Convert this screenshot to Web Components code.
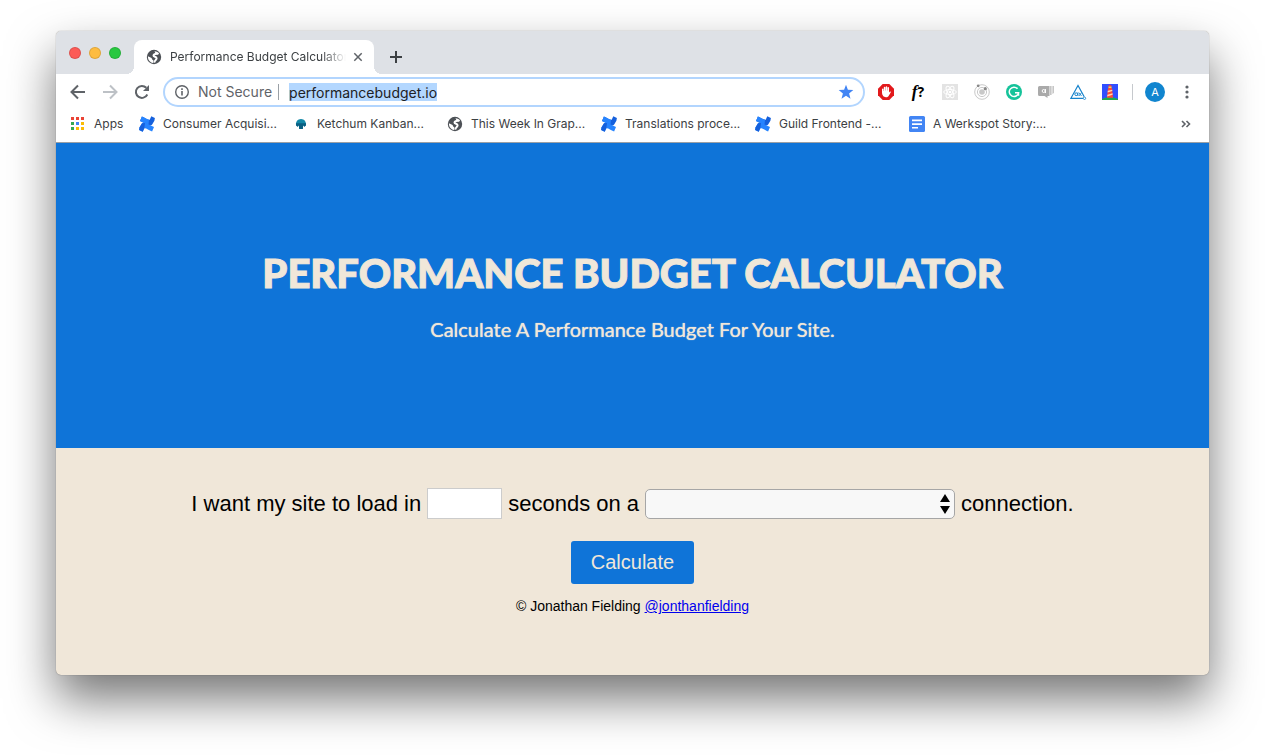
<!DOCTYPE html>
<html lang="en">
<head>
<meta charset="utf-8">
<title>Performance Budget Calculator</title>
<style>
html{height:100%}
body{margin:0;min-height:100%;background:#fff;display:flex;flex-direction:column}
</style>
</head>
<body>
<browser-window>
  <browser-tab slot="tabs">Performance Budget Calculator</browser-tab>
  <tool-bar slot="toolbar" address="performancebudget.io"></tool-bar>
  <bookmark-bar slot="bookmarks">
    <bookmark-item icon="confluence">Consumer Acquisi...</bookmark-item>
    <bookmark-item icon="ketchum">Ketchum Kanban...</bookmark-item>
    <bookmark-item icon="globe">This Week In Grap...</bookmark-item>
    <bookmark-item icon="confluence">Translations proce...</bookmark-item>
    <bookmark-item icon="confluence">Guild Frontend -...</bookmark-item>
    <bookmark-item icon="docs">A Werkspot Story:...</bookmark-item>
  </bookmark-bar>
  <page-hero>
    <span slot="title">Performance Budget Calculator</span>
    <span slot="tagline">Calculate A Performance Budget For Your Site.</span>
  </page-hero>
  <budget-form></budget-form>
  <page-credits>© Jonathan Fielding</page-credits>
</browser-window>

<script>
const ICONS = {
  globe: `<circle cx="8" cy="8" r="7.200" fill="#4d5156"/><path fill="none" stroke="#fff" stroke-width="2" d="M12.300 4.800C10.500 4.700 8 5 7.500 6.300 7.300 8 10.500 7.500 10.600 9.300 10.600 10.800 8.600 11.300 8.200 13.600"/><path fill="#fff" d="M1.900 7.300 5.600 9 6.200 10.500 7.500 11.500 7 13.900C4 13.600 1.800 11 1.900 7.300ZM8.500 2.200C10.500 2.200 12.300 3.200 13.200 5L11 5.300 9.500 4.600Z"/>`,
  confluence: `<path fill="#1560dc" d="M15.400 4.800 13 8.800C11 10.200 8.600 8.800 7.300 8L1 4.900 2.900.5C6.200 2 9.300 4.300 10.700 3.700L12.300.3 15.900 2Z"/><path fill="#2684ff" d="M1 4.900 2.900.5C6.200 2 8.300 3.200 10 3.800L9.500 8.700 7.300 8Z"/><path fill="#2684ff" d="M.6 11.200 3 7.200C5 5.800 7.400 7.200 8.700 8L15 11.100 13.100 15.500C9.800 14 6.700 11.700 5.300 12.300L3.700 15.700.1 14Z"/><path fill="#1560dc" d="M.6 11.200 3 7.200 6 7 5.300 12.300 3.700 15.700.1 14Z"/>`,
  ketchum: `<path fill="#1389a8" d="M3 9C2.600 5.800 4.700 3 8 3S13.400 5.800 13 9L11.600 10.800 10.200 9.600 9.800 13H6.200L5.800 9.600 4.400 10.800Z"/><path fill="#0a5f82" d="M3 7.300H13V9.300L11.600 10.800 10.200 8.900 9.800 13H6.200L5.800 8.900 4.400 10.800 3 9.300Z"/>`,
  docs: `<rect width="16" height="16" rx="1.500" fill="#4285f4"/><path fill="#fff" d="M3 3.500h10v1.700H3zm0 3.700h10v1.700H3zm0 3.700h6v1.700H3z"/>`,
  apps: `<g shape-rendering="crispEdges"><path fill="#ea4335" d="M1 1h3v3H1zm5 0h3v3H6zm5 0h3v3h-3z"/><path fill="#34a853" d="M1 6h3v3H1zm0 5h3v3H1z"/><path fill="#4285f4" d="M6 6h3v3H6z"/><path fill="#fbbc05" d="M11 6h3v3h-3zM6 11h3v3H6zm5 0h3v3h-3z"/></g>`,
  back: `<path d="M15 8H2M8 1.500 1.500 8 8 14.500" fill="none" stroke="#5f6368" stroke-width="2"/>`,
  forward: `<path d="M1 8H14M8 1.500 14.500 8 8 14.500" fill="none" stroke="#bdc1c6" stroke-width="2"/>`,
  reload: `<path d="M13.300 10.500A6 6 0 1 1 12.300 3.800" fill="none" stroke="#5f6368" stroke-width="2"/><path d="M15 1V7H9Z" fill="#5f6368"/>`,
  info: `<circle cx="8" cy="8" r="6.300" fill="none" stroke="#5f6368" stroke-width="1.400"/><path fill="#5f6368" d="M7.200 7h1.600v4.500H7.200zm0-2.700h1.600v1.600H7.200z"/>`,
  star: `<path fill="#4285f4" d="M8 .8 9.900 5.800 15.300 6.100 11.100 9.500 12.500 14.700 8 11.800 3.500 14.700 4.900 9.500.7 6.100 6.100 5.800Z"/>`,
  close: `<path d="M4.300 4.300 11.700 11.700M11.700 4.300 4.300 11.700" stroke="#5f6368" stroke-width="1.500"/>`,
  plus: `<path d="M8 2V14M2 8H14" stroke="#3c4043" stroke-width="2"/>`,
  stop: `<path fill="#e2191c" d="M4.700 0h6.600L16 4.700v6.600L11.300 16H4.700L0 11.300V4.700Z"/><path fill="#fff" d="M4 5.200C4 4.300 5.500 4.300 5.500 5.200V7H5.800V3.500C5.800 2.500 7.400 2.500 7.400 3.500V6.500H7.700V3C7.700 2 9.200 2 9.200 3V6.500H9.500V3.700C9.500 2.700 11 2.700 11 3.700V8.600L11.700 7.800C12.400 7.200 13.100 7.900 12.700 8.600L10.600 12C9.800 13.600 6.200 13.700 5.200 12.100 4.400 11 4 10 4 9Z"/>`,
  react: `<path fill="#e3e3e3" d="M0 0h16v16H0z"/><g fill="none" stroke="#fff"><ellipse cx="8" cy="8" rx="6.300" ry="2.500"/><ellipse cx="8" cy="8" rx="6.300" ry="2.500" transform="rotate(60 8 8)"/><ellipse cx="8" cy="8" rx="6.300" ry="2.500" transform="rotate(120 8 8)"/></g><circle cx="8" cy="8" r="1.300" fill="#fff"/>`,
  orbit: `<g fill="none" stroke="#c9c9c9"><circle cx="8" cy="8" r="7.300"/><circle cx="8" cy="8" r="4.600"/></g><circle cx="8" cy="8" r="2.800" fill="#c8c8c8"/><circle cx="4.200" cy="1.800" r="1.400" fill="#888"/><circle cx="11.300" cy="4.700" r="1.600" fill="#888"/>`,
  grammar: `<circle cx="8" cy="8" r="8" fill="#15c39a"/><path d="M11.500 4.700A4.700 4.700 0 1 0 12.600 8.800H9M12.500 8.800V11.800" fill="none" stroke="#fff" stroke-width="1.500"/>`,
  chat: `<path fill="#aaa" d="M1.500 2H11.500V12H9.500V14L6.500 12H1.500Q0 12 0 10.500V3.500Q0 2 1.500 2Z"/><path fill="#b8b8b8" d="M12.200 2H13.500V11H12.200zM14.500 2H15.800V9L14.500 10z"/><circle cx="5.700" cy="7" r="1.500" fill="none" stroke="#fff"/><path stroke="#fff" d="M7.500 5.100V9"/>`,
  axe: `<path d="M13.500 14.300H.9L8 1.500 14.200 12.800" fill="none" stroke="#1683cc" stroke-width="1.200"/><circle cx="14.500" cy="14.300" r="1.200" fill="#fff" stroke="#1683cc" stroke-width=".8"/><circle cx="6.200" cy="10.200" r="1.400" fill="none" stroke="#1683cc"/><path d="M7.900 8.500V12M8.900 8.600 11.500 12M11.500 8.600 8.900 12" fill="none" stroke="#1683cc" stroke-width=".9"/>`,
  lighthouse: `<path fill="#304ffe" d="M0 0h16v16H0z"/><path fill="#1faa4b" d="M0 16V15Q8 11 16 15V16Z"/><path fill="#ff4a35" d="M6 4h4L11 13.700H5Z"/><path fill="#ffd9b0" d="M5.800 6.800 10.300 5.700V7L5.600 8.500ZM5.400 10.800 10.600 9.300V10.800L5.200 12.500Z"/><path fill="#f34" d="M5.500 2.500 8 .5 10.500 2.500Z"/><path fill="#fdd835" d="M6.500 2.500h3V4h-3z"/>`,
  dots: `<g fill="#5f6368"><circle cx="8" cy="3" r="1.600"/><circle cx="8" cy="8" r="1.600"/><circle cx="8" cy="13" r="1.600"/></g>`,
  more: `<path d="M4 5 7 8 4 11M8.500 5 11.500 8 8.500 11" fill="none" stroke="#5f6368" stroke-width="1.600"/>`,
};

function define(name, html, setup) {
  const template = document.createElement('template');
  template.innerHTML = html;
  customElements.define(name, class extends HTMLElement {
    constructor() {
      super();
      this.attachShadow({ mode: 'open' }).append(template.content.cloneNode(true));
    }
    connectedCallback() {
      if (setup) setup(this, this.shadowRoot);
    }
  });
}

define('ui-icon', `<style>
  :host{display:block;flex:none;width:16px;height:16px}
  svg{display:block;width:100%;height:100%;overflow:visible}
</style><svg viewBox="0 0 16 16" aria-hidden="true"></svg>`, (host, root) => {
  root.querySelector('svg').innerHTML = ICONS[host.getAttribute('name')] || '';
});

define('browser-window', `<style>
  :host{display:flex;flex-direction:column;flex:1;margin:31px 56px 80px;border-radius:5px;overflow:hidden;background:#f0e7d9;
    font-family:Inter,"Liberation Sans",sans-serif;color:#3c4043;
    box-shadow:0 0 1px rgba(0,0,0,.5),0 24px 48px rgba(0,0,0,.54)}
  .strip{display:flex;align-items:flex-end;height:43px;background:#dee1e6;padding-left:13px;box-sizing:border-box}
  .lights{display:flex;gap:8px;align-self:center;margin-right:13px}
  .lights i{width:12px;height:12px;border-radius:50%;box-sizing:border-box;border:1px solid rgba(0,0,0,.12)}
  .lights i:nth-child(1){background:#fc5b57}.lights i:nth-child(2){background:#fdbc40}.lights i:nth-child(3){background:#28c840}
  button{border:0;background:none;padding:0;margin:0 0 9px 14px}
  main{display:block;flex:1;border-top:1px solid #9aa0a6}
</style>
<div class="strip"><div class="lights"><i></i><i></i><i></i></div><slot name="tabs"></slot>
<button aria-label="New tab"><ui-icon name="plus"></ui-icon></button></div>
<slot name="toolbar"></slot><slot name="bookmarks"></slot><main><slot></slot></main>`);

define('browser-tab', `<style>
  :host{display:flex;align-items:center;position:relative;width:240px;height:34px;box-sizing:border-box;padding:0 8px 0 12px;
    background:#fff;border-radius:8px 8px 0 0;font-size:12px}
  :host::before,:host::after{content:"";position:absolute;bottom:0;width:8px;height:8px}
  :host::before{left:-8px;background:radial-gradient(circle at 0 0,transparent 8px,#fff 8px)}
  :host::after{right:-8px;background:radial-gradient(circle at 100% 0,transparent 8px,#fff 8px)}
  .name{flex:1;min-width:0;margin-left:8px;white-space:nowrap;overflow:hidden;line-height:16px;
    mask-image:linear-gradient(to right,#000 calc(100% - 24px),transparent)}
  button{border:0;background:none;padding:0;margin-left:4px}
</style><ui-icon name="globe"></ui-icon><span class="name"><slot></slot></span>
<button aria-label="Close tab"><ui-icon name="close"></ui-icon></button>`);

define('tool-bar', `<style>
  :host{display:flex;align-items:center;height:36px;background:#fff;padding:0 14px}
  button{border:0;background:none;padding:0;font:inherit;color:inherit;display:block}
  .nav,.ext{display:flex;gap:16px}
  .box{flex:1;min-width:0;display:flex;align-items:center;height:30px;box-sizing:border-box;margin:0 13px;padding:0 9px;
    border:2px solid #b2d5fe;border-radius:15px;font-size:14px}
  .note{margin-left:8px;padding-right:6px;border-right:1px solid #9aa0a6;line-height:16px;color:#5f6368;white-space:nowrap}
  input{border:0;padding:0;margin-left:10px;height:18px;font:inherit;color:#202124;background:#b3d7ff;field-sizing:content;outline:0}
  .star{margin-left:auto}
  .what{width:16px;font:bold 14px/16px "Open Sans","Liberation Sans",sans-serif;color:#000;white-space:nowrap}
  .what i{font:italic bold 17px/16px "Liberation Serif",serif}
  hr{border:0;margin:0 12px 0 14px;width:1px;height:16px;background:#c6c9cd}
  .avatar{width:20px;height:20px;border-radius:50%;background:#1185cf;color:#fff;font-size:11px;line-height:20px;text-align:center;margin-right:14px}
</style>
<div class="nav"><button aria-label="Back"><ui-icon name="back"></ui-icon></button><button aria-label="Forward"><ui-icon name="forward"></ui-icon></button><button aria-label="Reload"><ui-icon name="reload"></ui-icon></button></div>
<div class="box"><ui-icon name="info"></ui-icon><span class="note">Not Secure</span><input type="text" aria-label="Address"><button class="star" aria-label="Bookmark"><ui-icon name="star"></ui-icon></button></div>
<div class="ext">
<button aria-label="Ad blocker"><ui-icon name="stop"></ui-icon></button>
<button class="what"><i>f</i>?</button>
<button aria-label="React tools"><ui-icon name="react"></ui-icon></button>
<button aria-label="Orbit"><ui-icon name="orbit"></ui-icon></button>
<button aria-label="Grammar"><ui-icon name="grammar"></ui-icon></button>
<button aria-label="Chat"><ui-icon name="chat"></ui-icon></button>
<button aria-label="Accessibility"><ui-icon name="axe"></ui-icon></button>
<button aria-label="Lighthouse"><ui-icon name="lighthouse"></ui-icon></button>
</div><hr><button class="avatar">A</button><button aria-label="Menu"><ui-icon name="dots"></ui-icon></button>`, (host, root) => {
  root.querySelector('input').value = host.getAttribute('address');
});

define('bookmark-bar', `<style>
  :host{display:flex;align-items:center;gap:18px;height:28px;background:#fff;padding:0 15px 4px 14px;font-size:12px}
  .apps{width:51px}
  button{border:0;background:none;padding:0;margin-left:auto}
</style><bookmark-item class="apps" icon="apps">Apps</bookmark-item><slot></slot>
<button aria-label="More bookmarks"><ui-icon name="more"></ui-icon></button>`);

define('bookmark-item', `<style>
  :host{display:block;width:136px;flex:none}
  a{display:flex;gap:8px;align-items:center;color:inherit;text-decoration:none;line-height:16px;white-space:nowrap}
</style><a href="#"><ui-icon></ui-icon><span><slot></slot></span></a>`, (host, root) => {
  const icon = root.querySelector('ui-icon');
  icon.setAttribute('name', host.getAttribute('icon'));
  icon.connectedCallback();
});

define('page-hero', `<style>
  :host{display:block;background:#0f74d8;color:#f0e7d9;text-align:center;padding:104px 20px 105px;font-family:Lato,sans-serif}
  h1{margin:0;font-size:40px;line-height:52px;font-weight:900;text-transform:uppercase;-webkit-text-stroke:1px currentColor}
  h2{margin:16px 0 0;font-size:20px;line-height:28px;font-weight:400;text-shadow:0 0 1px currentColor}
</style><h1><slot name="title"></slot></h1><h2><slot name="tagline"></slot></h2>`);

define('budget-form', `<style>
  :host{display:block;padding:40px 20px 0;color:#000;font-family:"Liberation Sans",sans-serif}
  form{display:flex;flex-direction:column;align-items:center;gap:22px}
  .line{display:flex;flex-wrap:wrap;justify-content:center;align-items:center;gap:6px;font-size:22px;line-height:31px}
  input{box-sizing:border-box;width:75px;height:31px;border:1px solid #ccc;background:#fff;padding:0 4px;font:inherit}
  .pick{position:relative;display:block}
  select{display:block;appearance:none;box-sizing:border-box;width:310px;height:30px;border:1px solid #a6a6a6;border-radius:5px;background:#f8f8f8;padding:0 24px 0 6px;font:inherit;font-size:20px}
  svg{position:absolute;right:4px;top:5px;pointer-events:none}
  button{border:0;border-radius:3px;background:#0f74d8;color:#f0e7d9;font:20px/23px "Liberation Sans",sans-serif;padding:10px 20px}
</style>
<form><div class="line"><label for="seconds">I want my site to load in</label><input id="seconds" type="text" inputmode="numeric">
<label for="connection">seconds on a</label><span class="pick"><select id="connection"><option></option></select>
<svg width="12" height="21" viewBox="0 0 12 21" aria-hidden="true"><path d="M6 0 11 8H1ZM6 20 1 12H11Z"/></svg></span><span>connection.</span></div>
<button type="button">Calculate</button></form>`);

define('page-credits', `<style>
  :host{display:block;padding:14px 20px 60px;color:#000;text-align:center;font:14px/16px "Liberation Sans",sans-serif}
  a{color:#00e}
</style><slot></slot> <a href="#">@jonthanfielding</a>`);
</script>
</body>
</html>
